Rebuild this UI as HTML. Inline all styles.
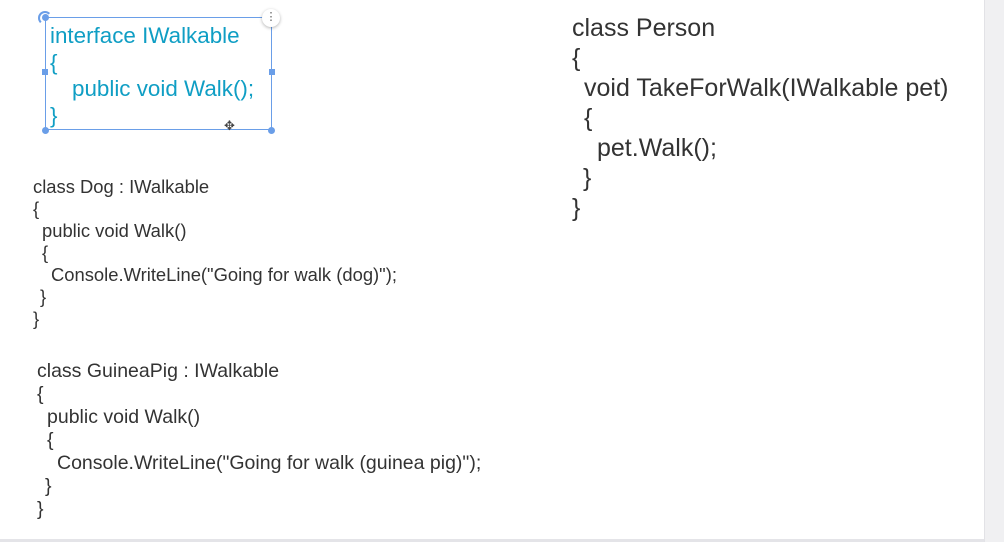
<!DOCTYPE html>
<html><head><meta charset="utf-8"><style>
html,body{margin:0;padding:0}
body{width:1004px;height:542px;position:relative;background:#fff;overflow:hidden;font-family:"Liberation Sans",Arial,sans-serif;}
.l{position:absolute;white-space:pre;line-height:1}
.b{color:#0f9ec4;font-size:22.4px}
.d{color:#333;font-size:18.4px}
.g{color:#333;font-size:19.5px}
.p{color:#333;font-size:25px}
</style></head><body>
<div style="position:absolute;left:984px;top:0;width:20px;height:542px;background:#f0f0f2;border-left:1px solid #e2e2e6"></div>
<div style="position:absolute;left:0;top:539px;width:984px;height:3px;background:#e4e4e8"></div>

<div style="position:absolute;left:45px;top:17px;width:227px;height:113px;border:1px solid #6a9ee8;box-sizing:border-box"></div>
<div style="position:absolute;left:42px;top:14px;width:7px;height:7px;border-radius:50%;background:#6a9ee8"></div>
<div style="position:absolute;left:38px;top:11px;width:10px;height:10px;border:2px solid #6a9ee8;border-color:#6a9ee8 transparent transparent #6a9ee8;border-radius:50%"></div>
<div style="position:absolute;left:42px;top:127px;width:7px;height:7px;border-radius:50%;background:#6a9ee8"></div>
<div style="position:absolute;left:268px;top:127px;width:7px;height:7px;border-radius:50%;background:#6a9ee8"></div>
<div style="position:absolute;left:42px;top:69px;width:6px;height:6px;background:#6a9ee8"></div>
<div style="position:absolute;left:269px;top:69px;width:6px;height:6px;background:#6a9ee8"></div>
<div style="position:absolute;left:262px;top:9px;width:18px;height:18px;border-radius:50%;background:#fff;box-shadow:0 1px 3px rgba(0,0,0,.3);color:#555;font-size:11px;text-align:center;line-height:17px">⋮</div>
<div style="position:absolute;left:224px;top:118px;font-size:13px;color:#444">✥</div>

<div class="l b" style="left:50px;top:25px">interface IWalkable</div>
<div class="l b" style="left:50px;top:52px">{</div>
<div class="l b" style="left:72px;top:78px">public void Walk();</div>
<div class="l b" style="left:50px;top:105px">}</div>

<div class="l d" style="left:33px;top:178px">class Dog : IWalkable</div>
<div class="l d" style="left:33px;top:200px">{</div>
<div class="l d" style="left:42px;top:222px">public void Walk()</div>
<div class="l d" style="left:42px;top:244px">{</div>
<div class="l d" style="left:51px;top:266px">Console.WriteLine("Going for walk (dog)");</div>
<div class="l d" style="left:40px;top:288px">}</div>
<div class="l d" style="left:33px;top:310px">}</div>

<div class="l g" style="left:37px;top:362px">class GuineaPig : IWalkable</div>
<div class="l g" style="left:37px;top:385px">{</div>
<div class="l g" style="left:47px;top:408px">public void Walk()</div>
<div class="l g" style="left:47px;top:431px">{</div>
<div class="l g" style="left:57px;top:454px">Console.WriteLine("Going for walk (guinea pig)");</div>
<div class="l g" style="left:45px;top:477px">}</div>
<div class="l g" style="left:37px;top:500px">}</div>

<div class="l p" style="left:572px;top:16px">class Person</div>
<div class="l p" style="left:572px;top:46px">{</div>
<div class="l p" style="left:584px;top:76px">void TakeForWalk(IWalkable pet)</div>
<div class="l p" style="left:584px;top:106px">{</div>
<div class="l p" style="left:597px;top:136px">pet.Walk();</div>
<div class="l p" style="left:583px;top:166px">}</div>
<div class="l p" style="left:572px;top:196px">}</div>
</body></html>
